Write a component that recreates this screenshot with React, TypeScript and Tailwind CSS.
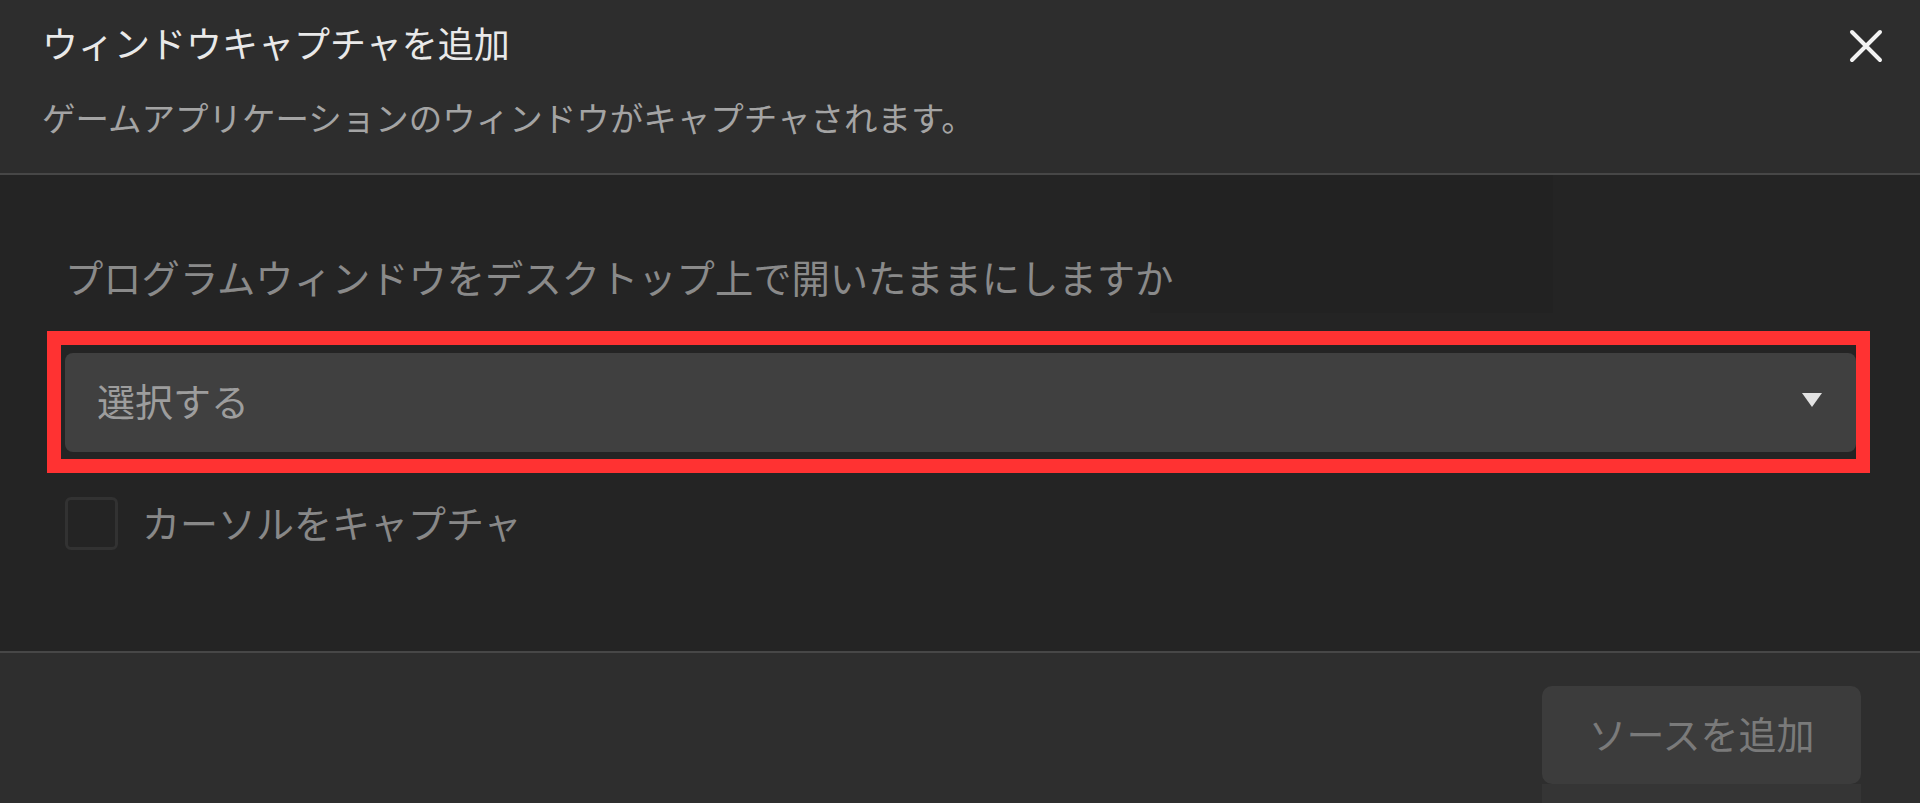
const JP = { fontFamily: '"Noto Sans CJK JP", "Noto Sans", sans-serif' };

function CloseIcon() {
  return (
    <svg width="34" height="34" viewBox="0 0 34 34" className="text-[#f2f2f2]">
      <path d="M3 3 L31 31 M31 3 L3 31" stroke="currentColor" strokeWidth="4" strokeLinecap="round" />
    </svg>
  );
}

function Caret() {
  return (
    <svg width="22" height="16" viewBox="0 0 22 16">
      <path d="M1 1 H21 L11 15 Z" fill="#e2e2e2" />
    </svg>
  );
}

export default function App() {
  return (
    <div className="flex h-[803px] w-[1920px] flex-col overflow-hidden bg-[#242424]" style={JP}>
      {/* header */}
      <div className="relative h-[173px] shrink-0 bg-[#2d2d2d] pl-[42px] pt-[24px]">
        <h1 className="text-[36px] leading-[36px] text-[#e9e9e9]">ウィンドウキャプチャを追加</h1>
        <p className="mt-[40px] text-[33.5px] leading-[34px] text-[#a4a4a4]">
          ゲームアプリケーションのウィンドウがキャプチャされます。
        </p>
        <button className="absolute right-[37px] top-[29px]">
          <CloseIcon />
        </button>
      </div>
      <div className="h-[2px] shrink-0 bg-[#474747]" />

      {/* body */}
      <div className="relative h-[476px] shrink-0 bg-[#242424] pl-[65px] pr-[64px] pt-[83px]">
        <div className="pointer-events-none absolute left-[1150px] top-0 h-[138px] w-[403px] bg-[#222222]" />
        <p className="relative text-[38.3px] leading-[38px] text-[#8a8a8a]">
          プログラムウィンドウをデスクトップ上で開いたままにしますか
        </p>
        <div className="relative mt-[57px]">
          <div className="flex h-[99px] items-center justify-between rounded-[8px] bg-[#404040] pb-[6px] pl-[32px] pr-[33px]">
            <span className="text-[38px] leading-[38px] text-[#9d9d9d]">選択する</span>
            <Caret />
          </div>
          <div className="pointer-events-none absolute bottom-[-21px] left-[-18px] right-[-14px] top-[-22px] border-[14px] border-[#ff3232]" />
        </div>
        <label className="mt-[45px] flex items-center gap-[24px]">
          <span className="h-[53px] w-[53px] rounded-[6px] border-[3px] border-[#323232]" />
          <span className="-mt-[4px] text-[38px] leading-[38px] text-[#888888]">カーソルをキャプチャ</span>
        </label>
      </div>
      <div className="h-[2px] shrink-0 bg-[#474747]" />

      {/* footer */}
      <div className="flex flex-1 flex-col items-end bg-[#2e2e2e] pr-[59px] pt-[33px]">
        <button className="flex h-[98px] w-[319px] items-center justify-center rounded-[10px] bg-[#3c3c3c] pb-[4px] text-[38px] leading-[38px] text-[#7a7a7a]">
          ソースを追加
        </button>
        <div className="h-[30px] w-[319px] bg-[#353535]" />
      </div>
    </div>
  );
}
